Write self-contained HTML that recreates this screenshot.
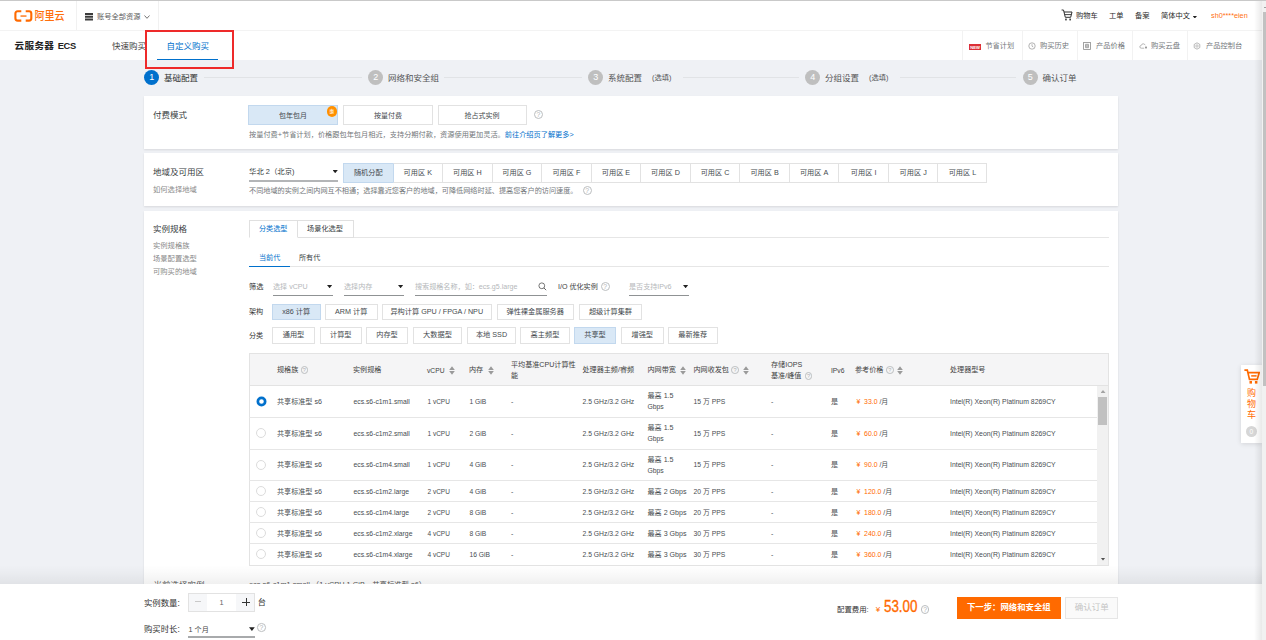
<!DOCTYPE html>
<html lang="zh-CN">
<head>
<meta charset="utf-8">
<title>云服务器 ECS - 自定义购买</title>
<style>
*{box-sizing:border-box;margin:0;padding:0}
html,body{width:1266px;height:640px;overflow:hidden;background:#eff1f5}
body{font-family:"Liberation Sans","Noto Sans CJK SC",sans-serif;color:#373d41;font-size:7.2px}
#app{position:relative;width:1266px;height:640px;overflow:hidden;background:#eff1f5}
.a{position:absolute;white-space:nowrap}
.t{position:absolute;white-space:nowrap;line-height:12px;height:12px}
.f7{font-size:7.2px}.f8{font-size:8.5px}.f9{font-size:9.3px}
.g{color:#73777a}.lg{color:#b5b8ba}.bl{color:#0070cc}.or{color:#ff6a00}
.card{position:absolute;left:144px;width:974px;background:#fff;box-shadow:0 1px 2px rgba(0,0,0,.10)}
.btn{position:absolute;border:1px solid #e2e2e2;background:#fff;text-align:center;white-space:nowrap;color:#454a4e}
.btn.on{background:#d9e8f6;border-color:#c2d8ee}
.q{position:absolute;width:9px;height:9px;border:0.8px solid #bbbec0;border-radius:50%;color:#b0b3b5;font-size:6.8px;line-height:7.6px;text-align:center}
.car{position:absolute;width:5.2px;height:3.3px;background:#222;clip-path:polygon(0 0,100% 0,50% 100%)}
.ul{position:absolute;height:1.4px;background:#8f9294}
.stepc{position:absolute;top:69.9px;width:15.3px;height:15.3px;border-radius:50%;background:#bfbfbf;color:#fff;font-size:9px;line-height:15.3px;text-align:center}
.stepl{position:absolute;top:77px;height:1px;background:#e1e3e6}

.th{position:absolute;white-space:nowrap;font-size:7.1px;line-height:11px;color:#424242}
.td{position:absolute;white-space:nowrap;font-size:7.1px;line-height:12px;height:12px;color:#484d51}
.rl{position:absolute;left:249px;width:849px;height:1px;background:#e6e6e6}
.rad{position:absolute;left:256px;width:10.4px;height:10.4px;border-radius:50%;border:1px solid #dcdcdc;background:#fff}
.rad.on{border:2.6px solid #0070cc}
.sort{position:absolute;width:6px;height:9px}
</style>
</head>
<body>
<div id="app">

<!-- ===== top bar ===== -->
<div class="a" style="left:0;top:0;width:1266px;height:30.5px;background:#fff;border-bottom:1px solid #f3f3f3"></div>
<div class="a" style="left:0;top:0;width:1266px;height:1px;background:#c9c9c9;z-index:9"></div>
<div class="a" style="left:76px;top:1px;width:1px;height:29px;background:#f1f1f1"></div>
<div class="a" style="left:158px;top:1px;width:1px;height:29px;background:#f1f1f1"></div>
<!-- logo -->
<svg class="a" style="left:13.6px;top:9.6px" width="19" height="12" viewBox="0 0 19 12"><path d="M7.3 1.3H3.7Q1.4 1.3 1.4 3.6V8.3Q1.4 10.6 3.7 10.6H7.3M11.7 1.3H15Q17.3 1.3 17.3 3.6V8.3Q17.3 10.6 15 10.6H11.7" fill="none" stroke="#ff6a00" stroke-width="2.1"/><rect x="6.5" y="5.4" width="6" height="1.3" fill="#ff6a00"/></svg>
<div class="t or" style="left:34.4px;top:11px;font-size:10.1px;font-weight:500;color:#ff6f0d;transform:scaleY(1.12);transform-origin:50% 50%">阿里云</div>
<!-- resource menu -->
<div class="a" style="left:85px;top:12.8px;width:7.8px;height:1.9px;background:#3c3c3c;box-shadow:0 2.75px 0 #3c3c3c,0 5.5px 0 #3c3c3c"></div>
<div class="t" style="left:97px;top:11px;font-size:7.25px;color:#606060">账号全部资源</div>
<svg class="a" style="left:143.8px;top:15px" width="6" height="4" viewBox="0 0 6 4"><path d="M0.5 0.5L3 3.3L5.5 0.5" fill="none" stroke="#666" stroke-width="0.9"/></svg>
<!-- right links -->
<svg class="a" style="left:1061px;top:9px" width="12" height="12" viewBox="0 0 12 12"><path d="M0.6 1H2.5L4.3 8.3H9.7L11 3H3" fill="none" stroke="#2e2e2e" stroke-width="1"/><path d="M3.8 5.6H10.2" stroke="#2e2e2e" stroke-width="0.9"/><rect x="4.2" y="9.6" width="1.5" height="1.8" fill="#2e2e2e"/><rect x="8.4" y="9.6" width="1.5" height="1.8" fill="#2e2e2e"/></svg>
<div class="t" style="left:1076px;top:10px;font-size:7.25px;color:#2a2a2a">购物车</div>
<div class="t" style="left:1109px;top:10px;font-size:7.25px;color:#2a2a2a">工单</div>
<div class="t" style="left:1135px;top:10px;font-size:7.25px;color:#2a2a2a">备案</div>
<div class="t" style="left:1161px;top:10px;font-size:7.25px;color:#2a2a2a">简体中文</div>
<div class="car" style="left:1192.7px;top:15.9px;width:4.3px;height:2.6px"></div>
<div class="t or" style="left:1211.2px;top:10.3px;font-size:7.8px;color:#ff6f10;transform:scaleX(.93);transform-origin:0 50%">sh0****eien</div>

<!-- ===== second bar ===== -->
<div class="a" style="left:0;top:31px;width:1266px;height:29px;background:#fff"></div>
<div class="t" style="left:14.4px;top:39.5px;font-size:9.6px;font-weight:bold;color:#222;letter-spacing:.4px">云服务器<span style="font-size:9.3px;letter-spacing:-.35px;margin-left:3.4px">ECS</span></div>
<div class="t f8" style="left:112px;top:39.5px;color:#444">快速购买</div>
<div class="t f8 bl" style="left:166.5px;top:39.5px">自定义购买</div>
<div class="a" style="left:157px;top:58.6px;width:61px;height:1.2px;background:#0070cc"></div>
<div class="a" style="left:144.5px;top:30px;width:89.5px;height:38.5px;border:2px solid #ee2a2a"></div>
<!-- second bar right -->
<div class="a" style="left:962px;top:31px;width:1px;height:29px;background:#f2f2f2"></div>
<div class="a" style="left:1022px;top:31px;width:1px;height:29px;background:#f2f2f2"></div>
<div class="a" style="left:1077px;top:31px;width:1px;height:29px;background:#f2f2f2"></div>
<div class="a" style="left:1132px;top:31px;width:1px;height:29px;background:#f2f2f2"></div>
<div class="a" style="left:1187px;top:31px;width:1px;height:29px;background:#f2f2f2"></div>
<svg class="a" style="left:968.6px;top:43.6px" width="12.4" height="6.2" viewBox="0 0 12.4 6.2"><rect width="12.4" height="6.2" fill="#dc2f37"/><text x="6.2" y="4.6" text-anchor="middle" font-family="Liberation Sans,sans-serif" font-size="4.2" font-weight="bold" fill="#fff">NEW</text></svg>
<div class="t g" style="left:985.4px;top:39.5px;font-size:7.2px">节省计划</div>
<svg class="a" style="left:1028.3px;top:41.8px" width="8" height="8" viewBox="0 0 8 8"><circle cx="4" cy="4" r="3.2" fill="none" stroke="#999" stroke-width="0.75"/><path d="M4 2.2V4.2L5.3 5" fill="none" stroke="#999" stroke-width="0.7"/></svg>
<div class="t g" style="left:1040px;top:39.5px;font-size:7.25px">购买历史</div>
<svg class="a" style="left:1083px;top:42px" width="8" height="8" viewBox="0 0 8 8"><rect x="0.6" y="0.5" width="6.8" height="7" fill="none" stroke="#8c8c8c" stroke-width="0.8"/><path d="M2.5 2.3H5.5V5.7H2.5zM4 2.3V5.7M2.5 4H5.5" fill="none" stroke="#8c8c8c" stroke-width="0.7"/></svg>
<div class="t g" style="left:1096px;top:39.5px;font-size:7.25px">产品价格</div>
<svg class="a" style="left:1138.5px;top:42px" width="9" height="8" viewBox="0 0 9 8"><path d="M5.2 6.2H2.4Q0.8 6.2 0.8 4.8Q0.8 3.6 2.2 3.5Q2.6 1.8 4.2 1.8Q5.6 1.8 6.2 3.2" fill="none" stroke="#999" stroke-width="0.7"/><rect x="6" y="4.6" width="2" height="1.8" fill="#999"/></svg>
<div class="t g" style="left:1151px;top:39.5px;font-size:7.25px">购买云盘</div>
<svg class="a" style="left:1193px;top:42px" width="8" height="8" viewBox="0 0 8 8"><path d="M4 0.8L6.8 2.4V5.6L4 7.2L1.2 5.6V2.4Z" fill="none" stroke="#999" stroke-width="0.7"/><circle cx="4" cy="4" r="1.2" fill="none" stroke="#999" stroke-width="0.6"/></svg>
<div class="t g" style="left:1206px;top:39.5px;font-size:7.25px">产品控制台</div>

<!-- ===== steps ===== -->
<div class="stepc" style="left:144px;background:#0070cc">1</div>
<div class="t f8" style="left:164px;top:71.5px;color:#333">基础配置</div>
<div class="stepl" style="left:204px;width:158px"></div>
<div class="stepc" style="left:368px">2</div>
<div class="t f8" style="left:388px;top:71.5px;color:#555">网络和安全组</div>
<div class="stepl" style="left:444px;width:138px"></div>
<div class="stepc" style="left:588px">3</div>
<div class="t f8" style="left:608px;top:71.5px;color:#555">系统配置</div>
<div class="t" style="left:652px;top:72px;font-size:7.25px;color:#555">(选填)</div>
<div class="stepl" style="left:683px;width:116px"></div>
<div class="stepc" style="left:805px">4</div>
<div class="t f8" style="left:825px;top:71.5px;color:#555">分组设置</div>
<div class="t" style="left:869px;top:72px;font-size:7.25px;color:#555">(选填)</div>
<div class="stepl" style="left:900px;width:116px"></div>
<div class="stepc" style="left:1022.6px">5</div>
<div class="t f8" style="left:1042.6px;top:71.5px;color:#555">确认订单</div>

<!-- ===== card 1 : 付费模式 ===== -->
<div class="card" style="top:96px;height:52.6px"></div>
<div class="t f8" style="left:153px;top:109px">付费模式</div>
<div class="btn on" style="left:248px;top:105px;width:90px;height:19.5px;line-height:19px;font-size:7px">包年包月</div>
<div class="a" style="left:326.5px;top:106px;width:10.5px;height:10.5px;border-radius:50%;background:#ff9000;color:#fff;font-size:5px;line-height:10px;text-align:center">惠</div>
<div class="btn" style="left:343px;top:105px;width:90px;height:19.5px;line-height:19px;font-size:7px">按量付费</div>
<div class="btn" style="left:437.5px;top:105px;width:89px;height:19.5px;line-height:19px;font-size:7px">抢占式实例</div>
<div class="q" style="left:533.8px;top:109.8px">?</div>
<div class="t g" style="left:249px;top:128.5px;font-size:7.2px">按量付费+节省计划，价格跟包年包月相近，支持分期付款，资源使用更加灵活。<span class="bl">前往介绍页了解更多&gt;</span></div>

<!-- ===== card 2 : 地域及可用区 ===== -->
<div class="card" style="top:153px;height:53px"></div>
<div class="t f8" style="left:153px;top:165.8px">地域及可用区</div>
<div class="t g" style="left:153px;top:183.8px;font-size:7.3px;color:#8a8a8a">如何选择地域</div>
<div class="t" style="left:249px;top:165.5px;font-size:7.4px">华北 2（北京)</div>
<div class="car" style="left:332.6px;top:170px"></div>
<div class="ul" style="left:249px;top:180.2px;width:89px;height:1.9px;background:#b3b5b7"></div>
<div class="btn on" style="left:343.00px;top:163px;width:49.54px;height:19.5px;line-height:18.5px;font-size:7.2px;border-right:none">随机分配</div>
<div class="btn" style="left:392.54px;top:163px;width:49.54px;height:19.5px;line-height:18.5px;font-size:7.2px;border-right:none;border-left-color:#c2d8ee">可用区 K</div>
<div class="btn" style="left:442.08px;top:163px;width:49.54px;height:19.5px;line-height:18.5px;font-size:7.2px;border-right:none">可用区 H</div>
<div class="btn" style="left:491.62px;top:163px;width:49.54px;height:19.5px;line-height:18.5px;font-size:7.2px;border-right:none">可用区 G</div>
<div class="btn" style="left:541.15px;top:163px;width:49.54px;height:19.5px;line-height:18.5px;font-size:7.2px;border-right:none">可用区 F</div>
<div class="btn" style="left:590.69px;top:163px;width:49.54px;height:19.5px;line-height:18.5px;font-size:7.2px;border-right:none">可用区 E</div>
<div class="btn" style="left:640.23px;top:163px;width:49.54px;height:19.5px;line-height:18.5px;font-size:7.2px;border-right:none">可用区 D</div>
<div class="btn" style="left:689.77px;top:163px;width:49.54px;height:19.5px;line-height:18.5px;font-size:7.2px;border-right:none">可用区 C</div>
<div class="btn" style="left:739.31px;top:163px;width:49.54px;height:19.5px;line-height:18.5px;font-size:7.2px;border-right:none">可用区 B</div>
<div class="btn" style="left:788.85px;top:163px;width:49.54px;height:19.5px;line-height:18.5px;font-size:7.2px;border-right:none">可用区 A</div>
<div class="btn" style="left:838.38px;top:163px;width:49.54px;height:19.5px;line-height:18.5px;font-size:7.2px;border-right:none">可用区 I</div>
<div class="btn" style="left:887.92px;top:163px;width:49.54px;height:19.5px;line-height:18.5px;font-size:7.2px;border-right:none">可用区 J</div>
<div class="btn" style="left:937.46px;top:163px;width:49.94px;height:19.5px;line-height:18.5px;font-size:7.2px">可用区 L</div>
<div class="t g" style="left:249px;top:185.3px;font-size:7.15px">不同地域的实例之间内网互不相通；选择靠近您客户的地域，可降低网络时延、提高您客户的访问速度。</div>
<div class="q" style="left:582.6px;top:185.8px">?</div>

<!-- ===== card 3 : 实例规格 ===== -->
<div class="card" style="top:211px;height:380px"></div>
<div class="t f8" style="left:153px;top:222.8px">实例规格</div>
<div class="t" style="left:153px;top:239.5px;font-size:7.3px;color:#8a8a8a">实例规格族</div>
<div class="t" style="left:153px;top:252.5px;font-size:7.3px;color:#8a8a8a">场景配置选型</div>
<div class="t" style="left:153px;top:265.5px;font-size:7.3px;color:#8a8a8a">可购买的地域</div>
<div class="a" style="left:249px;top:237px;width:860px;height:1px;background:#e6e6e6"></div>
<div class="a" style="left:248.5px;top:220px;width:49.5px;height:18px;border:1px solid #e0e0e0;border-bottom:1px solid #fff;background:#fff"></div>
<div class="a" style="left:298px;top:220px;width:55.5px;height:17.5px;border:1px solid #e0e0e0;border-left:none;background:#fff"></div>
<div class="t bl" style="left:259px;top:222.5px;font-size:7.1px">分类选型</div>
<div class="t" style="left:307px;top:222.5px;font-size:7.2px">场景化选型</div>
<div class="a" style="left:249px;top:266px;width:860px;height:1px;background:#e6e6e6"></div>
<div class="a" style="left:249px;top:265.6px;width:41px;height:1.4px;background:#0070cc"></div>
<div class="t bl" style="left:259px;top:251.7px;font-size:7.1px">当前代</div>
<div class="t" style="left:299px;top:251.7px;font-size:7.1px">所有代</div>
<div class="t" style="left:249px;top:280.7px;font-size:7.2px;color:#333">筛选</div>
<div class="t lg" style="left:273px;top:280.7px;font-size:7.1px">选择 vCPU</div>
<div class="car" style="left:327px;top:285px"></div>
<div class="ul" style="left:272.5px;top:294.5px;width:60px"></div>
<div class="t lg" style="left:344px;top:280.7px;font-size:7.1px">选择内存</div>
<div class="car" style="left:398px;top:285px"></div>
<div class="ul" style="left:344px;top:294.5px;width:60px"></div>
<div class="t lg" style="left:415px;top:280.7px;font-size:7.1px">搜索规格名称，如：ecs.g5.large</div>
<svg class="a" style="left:538px;top:281.5px" width="9" height="9" viewBox="0 0 9 9"><circle cx="3.8" cy="3.8" r="2.9" fill="none" stroke="#555" stroke-width="0.8"/><path d="M5.9 5.9L8.2 8.2" stroke="#555" stroke-width="0.9"/></svg>
<div class="ul" style="left:415px;top:294.5px;width:131.5px"></div>
<div class="t" style="left:558px;top:280.7px;font-size:7.1px;color:#3c3c3c">I/O 优化实例</div>
<div class="q" style="left:600.6px;top:282.4px">?</div>
<div class="t lg" style="left:629px;top:280.7px;font-size:7.1px">是否支持IPv6</div>
<div class="car" style="left:683px;top:285px"></div>
<div class="ul" style="left:629px;top:294.5px;width:60px"></div>
<div class="t" style="left:249px;top:305.5px;font-size:7.1px;color:#333">架构</div>
<div class="btn on" style="left:272px;top:303.8px;width:48.5px;height:16.2px;line-height:13.799999999999999px;font-size:7.2px">x86 计算</div>
<div class="btn" style="left:325px;top:303.8px;width:52.5px;height:16.2px;line-height:13.799999999999999px;font-size:7.2px">ARM 计算</div>
<div class="btn" style="left:382px;top:303.8px;width:109.5px;height:16.2px;line-height:13.799999999999999px;font-size:7.2px">异构计算 GPU / FPGA / NPU</div>
<div class="btn" style="left:496.5px;top:303.8px;width:77.5px;height:16.2px;line-height:13.799999999999999px;font-size:7.2px">弹性裸金属服务器</div>
<div class="btn" style="left:579px;top:303.8px;width:63px;height:16.2px;line-height:13.799999999999999px;font-size:7.2px">超级计算集群</div>
<div class="t" style="left:249px;top:329.5px;font-size:7.1px;color:#333">分类</div>
<div class="btn" style="left:272px;top:327.4px;width:43px;height:16.2px;line-height:13.799999999999999px;font-size:7.2px">通用型</div>
<div class="btn" style="left:319.5px;top:327.4px;width:42.5px;height:16.2px;line-height:13.799999999999999px;font-size:7.2px">计算型</div>
<div class="btn" style="left:366px;top:327.4px;width:42px;height:16.2px;line-height:13.799999999999999px;font-size:7.2px">内存型</div>
<div class="btn" style="left:413px;top:327.4px;width:49px;height:16.2px;line-height:13.799999999999999px;font-size:7.2px">大数据型</div>
<div class="btn" style="left:467px;top:327.4px;width:49px;height:16.2px;line-height:13.799999999999999px;font-size:7.2px">本地 SSD</div>
<div class="btn" style="left:520px;top:327.4px;width:50px;height:16.2px;line-height:13.799999999999999px;font-size:7.2px">高主频型</div>
<div class="btn on" style="left:574px;top:327.4px;width:42px;height:16.2px;line-height:13.799999999999999px;font-size:7.2px">共享型</div>
<div class="btn" style="left:621px;top:327.4px;width:42.5px;height:16.2px;line-height:13.799999999999999px;font-size:7.2px">增强型</div>
<div class="btn" style="left:668px;top:327.4px;width:49.5px;height:16.2px;line-height:13.799999999999999px;font-size:7.2px">最新推荐</div>
<div class="a" style="left:249px;top:353px;width:860px;height:212.6px;border:1px solid #e3e3e3;background:#fff"></div>
<div class="a" style="left:250px;top:354px;width:858px;height:31.5px;background:#f5f5f6;border-bottom:1px solid #e3e3e3"></div>
<div class="th" style="left:277px;top:365.1px">规格族</div>
<div class="q" style="left:300.5px;top:366.2px;width:7.6px;height:7.6px;line-height:6.2px;font-size:5.6px">?</div>
<div class="th" style="left:353px;top:365.1px">实例规格</div>
<div class="th" style="left:427px;top:365.1px;font-size:6.7px">vCPU</div>
<svg class="sort" style="left:449px;top:365.5px" viewBox="0 0 6 9"><path d="M3 0.2L5.8 3.9H0.2Z" fill="#9a9a9a"/><path d="M3 8.8L5.8 5.1H0.2Z" fill="#9a9a9a"/></svg>
<div class="th" style="left:469px;top:365.1px">内存</div>
<svg class="sort" style="left:488px;top:365.5px" viewBox="0 0 6 9"><path d="M3 0.2L5.8 3.9H0.2Z" fill="#9a9a9a"/><path d="M3 8.8L5.8 5.1H0.2Z" fill="#9a9a9a"/></svg>
<div class="th" style="left:511px;top:359.5px">平均基准CPU计算性</div>
<div class="th" style="left:511px;top:370.5px">能</div>
<div class="th" style="left:582.5px;top:365.1px">处理器主频/睿频</div>
<div class="th" style="left:647.5px;top:365.1px">内网带宽</div>
<svg class="sort" style="left:680px;top:365.5px" viewBox="0 0 6 9"><path d="M3 0.2L5.8 3.9H0.2Z" fill="#9a9a9a"/><path d="M3 8.8L5.8 5.1H0.2Z" fill="#9a9a9a"/></svg>
<div class="th" style="left:693.5px;top:365.1px">内网收发包</div>
<div class="q" style="left:731.2px;top:366.2px;width:7.6px;height:7.6px;line-height:6.2px;font-size:5.6px">?</div>
<svg class="sort" style="left:743px;top:365.5px" viewBox="0 0 6 9"><path d="M3 0.2L5.8 3.9H0.2Z" fill="#9a9a9a"/><path d="M3 8.8L5.8 5.1H0.2Z" fill="#9a9a9a"/></svg>
<div class="th" style="left:771px;top:359.5px">存储IOPS</div>
<div class="th" style="left:771px;top:370.5px">基准/峰值</div>
<div class="q" style="left:804.8px;top:372.2px;width:7.6px;height:7.6px;line-height:6.2px;font-size:5.6px">?</div>
<div class="th" style="left:831px;top:365.1px;font-size:6.7px">IPv6</div>
<div class="th" style="left:855px;top:365.1px">参考价格</div>
<div class="q" style="left:886px;top:366.2px;width:7.6px;height:7.6px;line-height:6.2px;font-size:5.6px">?</div>
<svg class="sort" style="left:896.7px;top:365.5px" viewBox="0 0 6 9"><path d="M3 0.2L5.8 3.9H0.2Z" fill="#9a9a9a"/><path d="M3 8.8L5.8 5.1H0.2Z" fill="#9a9a9a"/></svg>
<div class="th" style="left:950px;top:365.1px">处理器型号</div>
<svg class="a" style="left:255.8px;top:395.5px" width="11" height="11" viewBox="0 0 11 11"><circle cx="5.5" cy="5.5" r="3.65" fill="#fff" stroke="#0070cc" stroke-width="2.7"/></svg>
<div class="td" style="left:277px;top:395.8px">共享标准型 s6</div>
<div class="td" style="left:353.5px;top:395.8px;font-size:6.8px">ecs.s6-c1m1.small</div>
<div class="td" style="left:427.5px;top:395.8px;font-size:6.5px">1 vCPU</div>
<div class="td" style="left:469.5px;top:395.8px;font-size:6.7px">1 GiB</div>
<div class="td" style="left:511px;top:395.8px">-</div>
<div class="td" style="left:582.5px;top:395.8px;font-size:6.8px">2.5 GHz/3.2 GHz</div>
<div class="td" style="left:647.5px;top:390.3px">最高 1.5</div>
<div class="td" style="left:647.5px;top:401.3px;font-size:6.8px">Gbps</div>
<div class="td" style="left:693.5px;top:395.8px;font-size:6.8px">15 万 PPS</div>
<div class="td" style="left:771px;top:395.8px">-</div>
<div class="td" style="left:831px;top:395.8px">是</div>
<div class="td" style="left:856.4px;top:395.8px;font-size:6.9px"><span class="or">¥&nbsp; 33.0</span> /月</div>
<div class="td" style="left:950px;top:395.8px;font-size:6.9px">Intel(R) Xeon(R) Platinum 8269CY</div>
<div class="rl" style="top:417.0px"></div>
<div class="rad" style="top:428.1px"></div>
<div class="td" style="left:277px;top:427.8px">共享标准型 s6</div>
<div class="td" style="left:353.5px;top:427.8px;font-size:6.8px">ecs.s6-c1m2.small</div>
<div class="td" style="left:427.5px;top:427.8px;font-size:6.5px">1 vCPU</div>
<div class="td" style="left:469.5px;top:427.8px;font-size:6.7px">2 GiB</div>
<div class="td" style="left:511px;top:427.8px">-</div>
<div class="td" style="left:582.5px;top:427.8px;font-size:6.8px">2.5 GHz/3.2 GHz</div>
<div class="td" style="left:647.5px;top:422.2px">最高 1.5</div>
<div class="td" style="left:647.5px;top:433.2px;font-size:6.8px">Gbps</div>
<div class="td" style="left:693.5px;top:427.8px;font-size:6.8px">15 万 PPS</div>
<div class="td" style="left:771px;top:427.8px">-</div>
<div class="td" style="left:831px;top:427.8px">是</div>
<div class="td" style="left:856.4px;top:427.8px;font-size:6.9px"><span class="or">¥&nbsp; 60.0</span> /月</div>
<div class="td" style="left:950px;top:427.8px;font-size:6.9px">Intel(R) Xeon(R) Platinum 8269CY</div>
<div class="rl" style="top:448.9px"></div>
<div class="rad" style="top:459.8px"></div>
<div class="td" style="left:277px;top:459.4px">共享标准型 s6</div>
<div class="td" style="left:353.5px;top:459.4px;font-size:6.8px">ecs.s6-c1m4.small</div>
<div class="td" style="left:427.5px;top:459.4px;font-size:6.5px">1 vCPU</div>
<div class="td" style="left:469.5px;top:459.4px;font-size:6.7px">4 GiB</div>
<div class="td" style="left:511px;top:459.4px">-</div>
<div class="td" style="left:582.5px;top:459.4px;font-size:6.8px">2.5 GHz/3.2 GHz</div>
<div class="td" style="left:647.5px;top:453.9px">最高 1.5</div>
<div class="td" style="left:647.5px;top:464.9px;font-size:6.8px">Gbps</div>
<div class="td" style="left:693.5px;top:459.4px;font-size:6.8px">15 万 PPS</div>
<div class="td" style="left:771px;top:459.4px">-</div>
<div class="td" style="left:831px;top:459.4px">是</div>
<div class="td" style="left:856.4px;top:459.4px;font-size:6.9px"><span class="or">¥&nbsp; 90.0</span> /月</div>
<div class="td" style="left:950px;top:459.4px;font-size:6.9px">Intel(R) Xeon(R) Platinum 8269CY</div>
<div class="rl" style="top:480.4px"></div>
<div class="rad" style="top:486.1px"></div>
<div class="td" style="left:277px;top:485.7px">共享标准型 s6</div>
<div class="td" style="left:353.5px;top:485.7px;font-size:6.8px">ecs.s6-c1m2.large</div>
<div class="td" style="left:427.5px;top:485.7px;font-size:6.5px">2 vCPU</div>
<div class="td" style="left:469.5px;top:485.7px;font-size:6.7px">4 GiB</div>
<div class="td" style="left:511px;top:485.7px">-</div>
<div class="td" style="left:582.5px;top:485.7px;font-size:6.8px">2.5 GHz/3.2 GHz</div>
<div class="td" style="left:647.5px;top:485.7px">最高 2 Gbps</div>
<div class="td" style="left:693.5px;top:485.7px;font-size:6.8px">20 万 PPS</div>
<div class="td" style="left:771px;top:485.7px">-</div>
<div class="td" style="left:831px;top:485.7px">是</div>
<div class="td" style="left:856.4px;top:485.7px;font-size:6.9px"><span class="or">¥&nbsp; 120.0</span> /月</div>
<div class="td" style="left:950px;top:485.7px;font-size:6.9px">Intel(R) Xeon(R) Platinum 8269CY</div>
<div class="rl" style="top:501.4px"></div>
<div class="rad" style="top:507.0px"></div>
<div class="td" style="left:277px;top:506.6px">共享标准型 s6</div>
<div class="td" style="left:353.5px;top:506.6px;font-size:6.8px">ecs.s6-c1m4.large</div>
<div class="td" style="left:427.5px;top:506.6px;font-size:6.5px">2 vCPU</div>
<div class="td" style="left:469.5px;top:506.6px;font-size:6.7px">8 GiB</div>
<div class="td" style="left:511px;top:506.6px">-</div>
<div class="td" style="left:582.5px;top:506.6px;font-size:6.8px">2.5 GHz/3.2 GHz</div>
<div class="td" style="left:647.5px;top:506.6px">最高 2 Gbps</div>
<div class="td" style="left:693.5px;top:506.6px;font-size:6.8px">20 万 PPS</div>
<div class="td" style="left:771px;top:506.6px">-</div>
<div class="td" style="left:831px;top:506.6px">是</div>
<div class="td" style="left:856.4px;top:506.6px;font-size:6.9px"><span class="or">¥&nbsp; 180.0</span> /月</div>
<div class="td" style="left:950px;top:506.6px;font-size:6.9px">Intel(R) Xeon(R) Platinum 8269CY</div>
<div class="rl" style="top:522.3px"></div>
<div class="rad" style="top:528.0px"></div>
<div class="td" style="left:277px;top:527.5px">共享标准型 s6</div>
<div class="td" style="left:353.5px;top:527.5px;font-size:6.8px">ecs.s6-c1m2.xlarge</div>
<div class="td" style="left:427.5px;top:527.5px;font-size:6.5px">4 vCPU</div>
<div class="td" style="left:469.5px;top:527.5px;font-size:6.7px">8 GiB</div>
<div class="td" style="left:511px;top:527.5px">-</div>
<div class="td" style="left:582.5px;top:527.5px;font-size:6.8px">2.5 GHz/3.2 GHz</div>
<div class="td" style="left:647.5px;top:527.5px">最高 3 Gbps</div>
<div class="td" style="left:693.5px;top:527.5px;font-size:6.8px">30 万 PPS</div>
<div class="td" style="left:771px;top:527.5px">-</div>
<div class="td" style="left:831px;top:527.5px">是</div>
<div class="td" style="left:856.4px;top:527.5px;font-size:6.9px"><span class="or">¥&nbsp; 240.0</span> /月</div>
<div class="td" style="left:950px;top:527.5px;font-size:6.9px">Intel(R) Xeon(R) Platinum 8269CY</div>
<div class="rl" style="top:543.2px"></div>
<div class="rad" style="top:548.9px"></div>
<div class="td" style="left:277px;top:548.5px">共享标准型 s6</div>
<div class="td" style="left:353.5px;top:548.5px;font-size:6.8px">ecs.s6-c1m4.xlarge</div>
<div class="td" style="left:427.5px;top:548.5px;font-size:6.5px">4 vCPU</div>
<div class="td" style="left:469.5px;top:548.5px;font-size:6.7px">16 GiB</div>
<div class="td" style="left:511px;top:548.5px">-</div>
<div class="td" style="left:582.5px;top:548.5px;font-size:6.8px">2.5 GHz/3.2 GHz</div>
<div class="td" style="left:647.5px;top:548.5px">最高 3 Gbps</div>
<div class="td" style="left:693.5px;top:548.5px;font-size:6.8px">30 万 PPS</div>
<div class="td" style="left:771px;top:548.5px">-</div>
<div class="td" style="left:831px;top:548.5px">是</div>
<div class="td" style="left:856.4px;top:548.5px;font-size:6.9px"><span class="or">¥&nbsp; 360.0</span> /月</div>
<div class="td" style="left:950px;top:548.5px;font-size:6.9px">Intel(R) Xeon(R) Platinum 8269CY</div>
<div class="a" style="left:1097px;top:386px;width:11px;height:178.6px;background:#f1f1f1"></div>
<div class="a" style="left:1098.4px;top:397px;width:8.6px;height:27.5px;background:#c1c1c1"></div>
<div class="a" style="left:1100.5px;top:390px;width:5px;height:3px;background:#a3a3a3;clip-path:polygon(50% 0,100% 100%,0 100%)"></div>
<div class="a" style="left:1100.5px;top:557.5px;width:5px;height:3px;background:#505050;clip-path:polygon(0 0,100% 0,50% 100%)"></div>
<div class="t f8" style="left:153.5px;top:578.8px;color:#555">当前选择实例</div>
<div class="t" style="left:249px;top:578.6px;font-size:7.35px;color:#555">ecs.s6-c1m1.small （1 vCPU 1 GiB，共享标准型 s6）</div>
<!-- ===== floating cart ===== -->
<div class="a" style="left:1241px;top:364.8px;width:21px;height:78px;background:#fff;box-shadow:0 1px 5px rgba(0,0,0,.12)"></div>
<svg class="a" style="left:1243.5px;top:369.3px" width="16" height="15" viewBox="0 0 16 15"><path d="M0.4 1.1H3.3L5.5 10.4H13.2L15.2 3.7H4.1" fill="none" stroke="#ff6a00" stroke-width="1.7"/><path d="M7.2 6.9H12.6" stroke="#ff6a00" stroke-width="1.5"/><rect x="5.5" y="12" width="2.5" height="2.6" fill="#ff6a00"/><rect x="10.9" y="12" width="2.5" height="2.6" fill="#ff6a00"/></svg>
<div class="a or" style="left:1246.5px;top:387.6px;width:10px;font-size:9px;line-height:11.2px;white-space:normal;text-align:center;color:#ff6a00">购物车</div>
<div class="a" style="left:1245.6px;top:426px;width:11.4px;height:11.4px;border-radius:50%;background:#d6d6d6;color:#fff;font-size:6.5px;line-height:11.4px;text-align:center">0</div>
<!-- ===== bottom bar ===== -->
<div class="a" style="left:0;top:583.7px;width:1266px;height:57px;background:#fff;"></div>
<div class="a" style="left:0;top:565px;width:1262px;height:18.7px;background:linear-gradient(180deg,rgba(0,0,0,0),rgba(0,0,0,.02) 40%,rgba(0,0,0,.06))"></div>
<div class="t" style="left:144px;top:596.8px;font-size:8.4px;color:#333">实例数量:</div>
<div class="a" style="left:188.2px;top:593.2px;width:66.8px;height:19px;border:1px solid #e2e2e2;background:#fff"></div>
<div class="a" style="left:189px;top:594px;width:17.8px;height:17.4px;background:#f6f7f9"></div>
<div class="a" style="left:236.2px;top:594px;width:18px;height:17.4px;background:#f6f7f9"></div>
<div class="a" style="left:195px;top:601.2px;width:6.2px;height:1px;background:#c9c9c9"></div>
<div class="t" style="left:219.6px;top:597px;font-size:7.4px;color:#666">1</div>
<div class="a" style="left:242.2px;top:601.6px;width:7.8px;height:1.1px;background:#333"></div><div class="a" style="left:245.55px;top:598.2px;width:1.1px;height:7.8px;background:#333"></div>
<div class="t" style="left:257.8px;top:596.8px;font-size:8.2px;color:#333">台</div>
<div class="t" style="left:144px;top:622.8px;font-size:8.4px;color:#333">购买时长:</div>
<div class="t" style="left:188.5px;top:623.5px;font-size:7.2px;color:#444">1 个月</div>
<div class="car" style="left:249px;top:627.3px;width:5.8px;height:3.8px"></div>
<div class="ul" style="left:188.4px;top:636.3px;width:66.6px;height:1.7px;background:#a8aaac"></div>
<div class="q" style="left:257.2px;top:623.2px;width:8.6px;height:8.6px">?</div>
<div class="t" style="left:837px;top:604px;font-size:7.4px;color:#333">配置费用:</div>
<div class="t or" style="left:875.8px;top:604px;font-size:8px">¥</div>
<div class="a or" style="left:884px;top:597.2px;font-size:16px;line-height:20px;height:20px;transform:scaleX(.835);transform-origin:0 0;-webkit-text-stroke:.35px #ff6a00">53.00</div>
<div class="q" style="left:920.8px;top:605.3px;width:8.6px;height:8.6px">?</div>
<div class="a" style="left:957.2px;top:597.4px;width:103.4px;height:21.4px;background:#ff6a00;color:#fff;font-size:8.4px;font-weight:bold;line-height:21.6px;text-align:center">下一步：网络和安全组</div>
<div class="a" style="left:1065px;top:597.4px;width:53.4px;height:21.4px;background:#fafafa;border:1px solid #e6e6e6;color:#c4c4c4;font-size:8.5px;line-height:19.8px;text-align:center">确认订单</div>
<!-- ===== right edge / page scrollbar ===== -->
<div class="a" style="left:1254px;top:1px;width:8px;height:639px;background:linear-gradient(90deg,rgba(0,0,0,0),rgba(0,0,0,.085))"></div>
<div class="a" style="left:1261.6px;top:0;width:5px;height:640px;background:#f1f1f1"></div>
<div class="a" style="left:1262.6px;top:11.6px;width:4px;height:374px;background:#c1c1c1"></div>
<div class="a" style="left:1264.4px;top:7px;width:2px;height:1.2px;background:#a0a0a0"></div>

</div>
</body>
</html>
